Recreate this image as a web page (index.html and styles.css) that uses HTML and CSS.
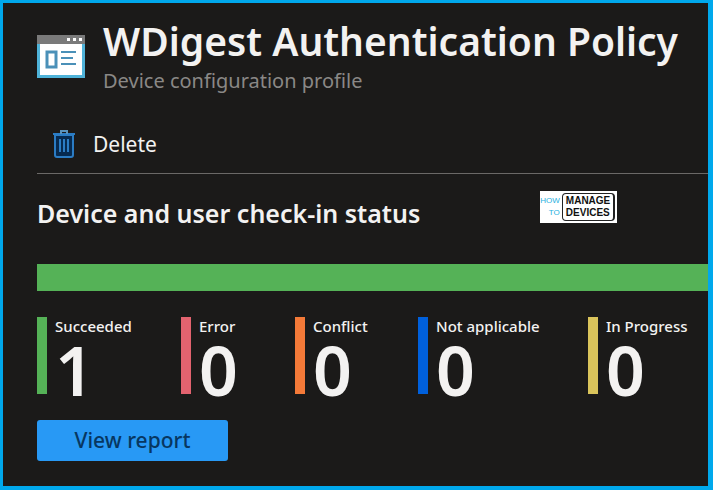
FILE: index.html
```html
<!DOCTYPE html>
<html lang="en">
<head>
<meta charset="UTF-8" />
<meta name="viewport" content="width=device-width, initial-scale=1" />
<title>WDigest Authentication Policy</title>
<link rel="stylesheet" href="styles.css">
</head>
<body>

<main class="blade">
  <header class="blade-header">
    <svg class="profile-icon" viewBox="0 0 48 43" aria-hidden="true">
      <rect width="48" height="43" fill="#4fb3d9"/>
      <rect width="48" height="9" fill="#7a7a7a"/>
      <rect x="3" y="9" width="42" height="31" fill="#fff"/>
      <path d="M30 3h3v3h-3zM36 3h3v3h-3zM42 3h3v3h-3z" fill="#fff"/>
      <rect x="10" y="17" width="9" height="15" fill="#fff" stroke="#4a90b8" stroke-width="3"/>
      <path d="M24 17h15M24 23h12M24 29h15" stroke="#4a90b8" stroke-width="2"/>
    </svg>
    <div>
      <h1>WDigest Authentication Policy</h1>
      <p class="subtitle">Device configuration profile</p>
    </div>
  </header>

  <div class="toolbar">
    <button type="button" class="delete-btn">
      <svg class="trash-icon" viewBox="0 0 22 28" aria-hidden="true">
        <path d="M2 5v20q0 2 2 2h14q2 0 2-2V5z" fill="#062a50" stroke="#2b7cc4" stroke-width="2"/>
        <path d="M0 4h22" stroke="#2b7cc4" stroke-width="2"/>
        <path d="M8 4V1h6v3" fill="none" stroke="#5a93bd" stroke-width="2"/>
        <path d="M7 9v13M11 9v13M15 9v13" stroke="#2b7cc4" stroke-width="2"/>
      </svg>
      Delete
    </button>
  </div>

  <div class="section-header">
    <h2>Device and user check-in status</h2>
    <div class="site-logo">
      <div class="logo-how">HOW<br>TO</div>
      <div class="logo-name">MANAGE<br>DEVICES</div>
    </div>
  </div>

  <div class="status-bar"></div>

  <dl class="stats">
    <div class="stat succeeded"><dt>Succeeded</dt><dd>1</dd></div>
    <div class="stat error"><dt>Error</dt><dd>0</dd></div>
    <div class="stat conflict"><dt>Conflict</dt><dd>0</dd></div>
    <div class="stat not-applicable"><dt>Not applicable</dt><dd>0</dd></div>
    <div class="stat in-progress"><dt>In Progress</dt><dd>0</dd></div>
  </dl>

  <button type="button" class="report-btn">View report</button>
</main>

</body>
</html>
```
FILE: styles.css
```css
* {
  box-sizing: border-box;
}

body {
  margin: 0;
  background: #1b1a19;
  color: #f3f2f1;
  font-family: "Noto Sans", "Open Sans", sans-serif;
}

h1, h2, p, dl, dd {
  margin: 0;
}

button {
  border: none;
  font-family: inherit;
  cursor: pointer;
}

.blade {
  min-height: 100vh;
  padding: 16px 0 24px 34px;
  border: solid #00a8ec;
  border-width: 3px 5px 4px 3px;
}

.blade-header {
  display: flex;
  gap: 18px;
}

.profile-icon {
  flex: none;
  width: 48px;
  height: 43px;
  margin-top: 16px;
}

h1 {
  font-size: 39px;
  line-height: 44px;
  font-weight: 600;
  white-space: nowrap;
}

.subtitle {
  color: #8a8886;
  font-size: 20px;
  line-height: 36px;
}

.toolbar {
  padding: 28px 0 12px 16px;
  border-bottom: 1px solid #6b6967;
}

.delete-btn {
  display: flex;
  align-items: center;
  gap: 18px;
  padding: 0;
  background: none;
  color: #f3f2f1;
  font-size: 21px;
  line-height: 34px;
}

.trash-icon {
  width: 22px;
  height: 28px;
}

.section-header {
  display: flex;
  gap: 120px;
  padding-top: 17px;
}

h2 {
  font-size: 25px;
  line-height: 44px;
  font-weight: 600;
  white-space: nowrap;
}

.site-logo {
  display: flex;
  justify-content: flex-end;
  gap: 2px;
  height: 32px;
  padding: 2px 2px 2px 0;
  background: #fff;
  font-family: "Liberation Sans", sans-serif;
  line-height: 12px;
}

.logo-how {
  padding-top: 2px;
  color: #1fb0e0;
  font-size: 8px;
  text-align: right;
}

.logo-name {
  padding: 1px 3px;
  border: 1px solid #222;
  border-right-width: 2px;
  border-radius: 4px;
  color: #111;
  font-size: 10px;
  font-weight: bold;
}

.status-bar {
  height: 27px;
  margin-top: 29px;
  background: #55b257;
}

.stats {
  display: grid;
  grid-template-columns: 144fr 114fr 123fr 170fr 120fr;
  margin-top: 26px;
}

.stat {
  height: 77px;
  padding-left: 8px;
  border-left: 10px solid;
  white-space: nowrap;
}

.stat dt {
  color: #f3f2f1;
  font-size: 15px;
  line-height: 18px;
  font-weight: 500;
}

.stat dd {
  color: #f3f2f1;
  font-size: 68px;
  line-height: 70px;
  font-weight: 600;
}

.succeeded { border-color: #55b257; }
.error { border-color: #e3636f; }
.conflict { border-color: #f47a38; }
.not-applicable { border-color: #0060dc; }
.in-progress { border-color: #dac45b; }

.report-btn {
  display: block;
  width: 191px;
  margin-top: 26px;
  padding: 0;
  border-radius: 3px;
  background: #2899f5;
  color: #073761;
  font-size: 21px;
  line-height: 41px;
  font-weight: 500;
}
```
